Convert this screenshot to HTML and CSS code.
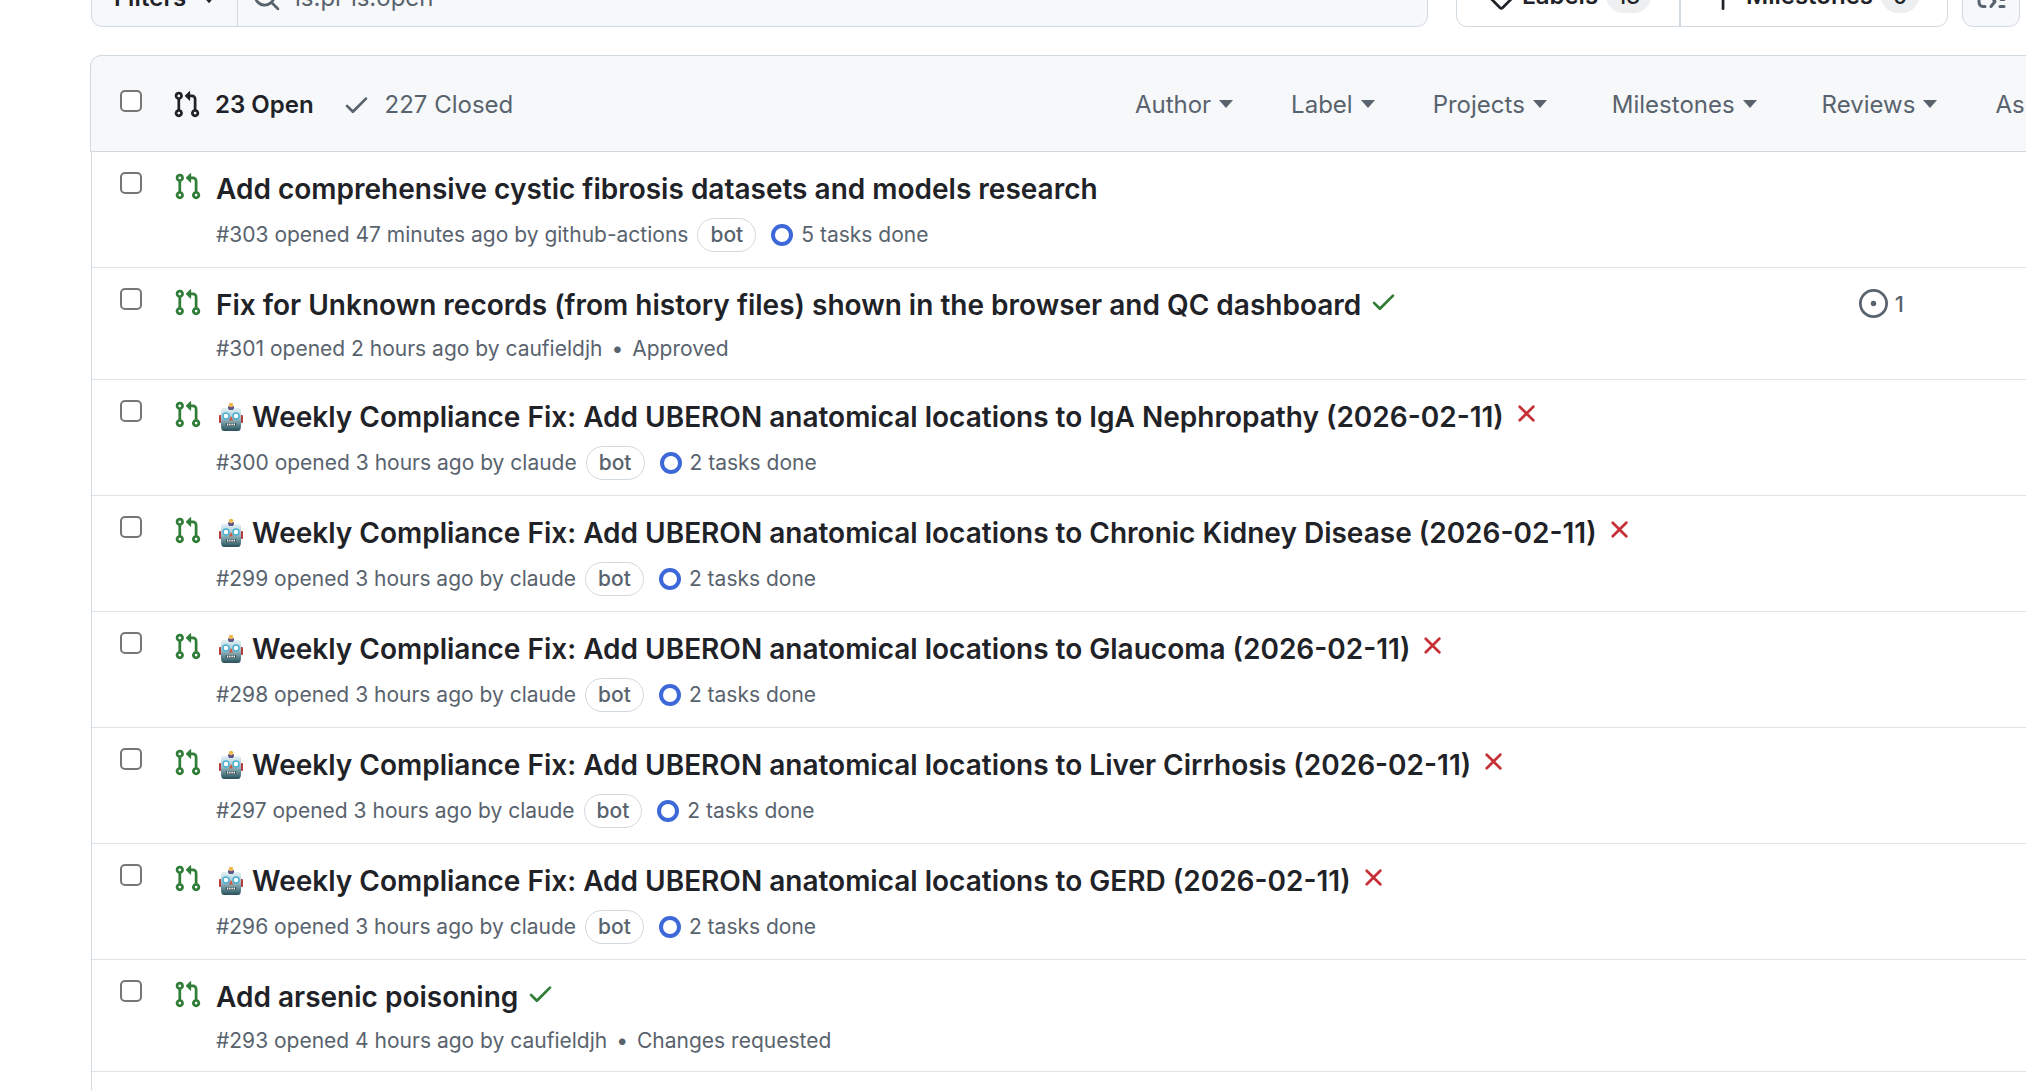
FILE: index.html
```html
<!DOCTYPE html>
<html lang="en">
	<head>
		<meta charset="utf-8">
		<title>Pull requests</title>

		<link rel="stylesheet" href="styles.css">
	</head>
	<body>
		<!-- icon sprite -->
		<svg class="sprite" aria-hidden="true">
			<symbol id="pr" viewBox="0 0 16 16">
				<path d="M1.5 3.25a2.25 2.25 0 1 1 3 2.122v5.256a2.251 2.251 0 1 1-1.5 0V5.372A2.25 2.25 0 0 1 1.5 3.25Zm5.677-.177L9.573.677A.25.25 0 0 1 10 .854V2.5h1A2.5 2.5 0 0 1 13.5 5v5.628a2.251 2.251 0 1 1-1.5 0V5a1 1 0 0 0-1-1h-1v1.646a.25.25 0 0 1-.427.177L7.177 3.427a.25.25 0 0 1 0-.354ZM3.75 2.5a.75.75 0 1 0 0 1.5.75.75 0 0 0 0-1.5Zm0 9.5a.75.75 0 1 0 0 1.5.75.75 0 0 0 0-1.5Zm8.25.75a.75.75 0 1 0 1.5 0 .75.75 0 0 0-1.5 0Z"/>
			</symbol>
			<symbol id="check" viewBox="0 0 16 16">
				<path d="M13.78 4.22a.75.75 0 0 1 0 1.06l-7.25 7.25a.75.75 0 0 1-1.06 0L2.22 9.28a.751.751 0 0 1 .018-1.042.751.751 0 0 1 1.042-.018L6 10.94l6.72-6.72a.75.75 0 0 1 1.06 0Z"/>
			</symbol>
			<symbol id="cross" viewBox="0 0 16 16">
				<path d="M3.72 3.72a.75.75 0 0 1 1.06 0L8 6.94l3.22-3.22a.749.749 0 0 1 1.275.326.749.749 0 0 1-.215.734L9.06 8l3.22 3.22a.749.749 0 0 1-.326 1.275.749.749 0 0 1-.734-.215L8 9.06l-3.22 3.22a.751.751 0 0 1-1.042-.018.751.751 0 0 1-.018-1.042L6.94 8 3.72 4.78a.75.75 0 0 1 0-1.06Z"/>
			</symbol>
			<symbol id="issue" viewBox="0 0 16 16">
				<path d="M8 9.5a1.5 1.5 0 1 0 0-3 1.5 1.5 0 0 0 0 3Z"/>
				<path d="M8 0a8 8 0 1 1 0 16A8 8 0 0 1 8 0ZM1.5 8a6.5 6.5 0 1 0 13 0 6.5 6.5 0 0 0-13 0Z"/>
			</symbol>
			<symbol id="search" viewBox="0 0 16 16">
				<path d="M10.68 11.74a6 6 0 0 1-7.922-8.982 6 6 0 0 1 8.982 7.922l3.04 3.04a.749.749 0 0 1-.326 1.275.749.749 0 0 1-.734-.215ZM11.5 7a4.499 4.499 0 1 0-8.997 0A4.499 4.499 0 0 0 11.5 7Z"/>
			</symbol>
			<symbol id="tag" viewBox="0 0 16 16">
				<path d="M1 7.775V2.75C1 1.784 1.784 1 2.75 1h5.025c.464 0 .91.184 1.238.513l6.25 6.25a1.75 1.75 0 0 1 0 2.474l-5.026 5.026a1.75 1.75 0 0 1-2.474 0l-6.25-6.25A1.752 1.752 0 0 1 1 7.775Zm1.5 0c0 .066.026.13.073.177l6.25 6.25a.25.25 0 0 0 .354 0l5.025-5.025a.25.25 0 0 0 0-.354l-6.25-6.25a.25.25 0 0 0-.177-.073H2.75a.25.25 0 0 0-.25.25ZM6 5a1 1 0 1 1 0 2 1 1 0 0 1 0-2Z"/>
			</symbol>
			<symbol id="milestone" viewBox="0 0 16 16">
				<path d="M7.75 0a.75.75 0 0 1 .75.75V3h3.634c.414 0 .814.147 1.13.414l2.07 1.75a1.75 1.75 0 0 1 0 2.672l-2.07 1.75a1.75 1.75 0 0 1-1.13.414H8.5v5.25a.75.75 0 0 1-1.5 0V10H2.75A1.75 1.75 0 0 1 1 8.25v-3.5C1 3.784 1.784 3 2.75 3H7V.75A.75.75 0 0 1 7.75 0Zm4.384 8.5a.25.25 0 0 0 .161-.06l2.07-1.75a.248.248 0 0 0 0-.38l-2.07-1.75a.25.25 0 0 0-.161-.06H2.75a.25.25 0 0 0-.25.25v3.5c0 .138.112.25.25.25Z"/>
			</symbol>
			<symbol id="caret" viewBox="0 0 14 8">
				<path d="M0 0h14l-7 8z"/>
			</symbol>
			<symbol id="ring" viewBox="0 0 22 22">
				<circle cx="11" cy="11" r="9" fill="none" stroke="currentColor" stroke-width="4"/>
			</symbol>
			<symbol id="codescan" viewBox="0 0 29 29">
				<path d="M8 23.500H6q-4 0-4-5v-8q0-5 4-5M14 13.500l4 5-4 5M23 23.500h4M24 16.500h3" fill="none" stroke="currentColor" stroke-width="3" stroke-linecap="round" stroke-linejoin="round"/>
			</symbol>
			<symbol id="robot" viewBox="0 0 26 30">
				<defs>
					<linearGradient id="metal" x1="0" y1="0" x2="0" y2="1">
						<stop offset="0" stop-color="#e4f2f4"/>
						<stop offset=".4" stop-color="#a5cbd3"/>
						<stop offset="1" stop-color="#28515c"/>
					</linearGradient>
				</defs>
				<rect x="1" y="13" width="3" height="8" rx="1" fill="#b83c3a"/>
				<rect x="22" y="13" width="3" height="8" rx="1" fill="#b83c3a"/>
				<rect x="10" y="4" width="6" height="4" rx="1" fill="#5d548c"/>
				<circle cx="13" cy="3" r="2.300" fill="#efb94f"/>
				<path d="M5 6h16q2 0 2 3v15q0 5-3 5H6q-3 0-3-5V9q0-3 2-3z" fill="url(#metal)"/>
				<path d="M10 6h6l-1 2h-4z" fill="#5d548c"/>
				<circle cx="8" cy="14" r="3" fill="#fff" stroke="#4db0d5" stroke-width="1.500"/>
				<circle cx="18" cy="14" r="3" fill="#fff" stroke="#4db0d5" stroke-width="1.500"/>
				<path d="M13 14l2.200 4.500h-4.400z" fill="#d2553f"/>
				<rect x="8" y="21" width="10" height="3" rx="1" fill="#33454a"/>
				<path d="M9 22.500h8" stroke="#fff" stroke-width="1.800" stroke-dasharray="1.400 .800"/>
			</symbol>
		</svg>

		<div class="page">
			<div class="toolbar">
				<form class="search">
					<button class="filters" type="button">Filters <svg class="caret"><use href="#caret"/></svg></button>
					<label class="query">
						<svg class="icon"><use href="#search"/></svg>
						<input type="text" value="is:pr is:open" aria-label="Search all pull requests">
					</label>
				</form>
				<nav class="links">
					<a href="#labels"><svg class="icon"><use href="#tag"/></svg>Labels<span class="count">13</span></a>
					<a href="#milestones"><svg class="icon"><use href="#milestone"/></svg>Milestones<span class="count">0</span></a>
				</nav>
				<button class="code" type="button" aria-label="Code"><svg class="icon"><use href="#codescan"/></svg></button>
			</div>

			<div class="box">
				<div class="header">
					<input class="tick" type="checkbox" aria-label="Select all">
					<a class="state open" href="#open"><svg class="icon"><use href="#pr"/></svg>23 Open</a>
					<a class="state" href="#closed"><svg class="icon"><use href="#check"/></svg>227 Closed</a>
					<div class="menus">
						<button type="button">Author <svg class="caret"><use href="#caret"/></svg></button>
						<button type="button">Label <svg class="caret"><use href="#caret"/></svg></button>
						<button type="button">Projects <svg class="caret"><use href="#caret"/></svg></button>
						<button class="wide" type="button">Milestones <svg class="caret"><use href="#caret"/></svg></button>
						<button type="button">Reviews <svg class="caret"><use href="#caret"/></svg></button>
						<button type="button">Assignee <svg class="caret"><use href="#caret"/></svg></button>
					</div>
				</div>

				<div class="rows">
					<div class="row">
						<input class="tick" type="checkbox" aria-label="Select #303">
						<svg class="icon green"><use href="#pr"/></svg>
						<div class="main">
							<div class="title"><a href="#303">Add comprehensive cystic fibrosis datasets and models research</a></div>
							<div class="meta"><span>#303 opened 47 minutes ago by github-actions</span><span class="bot">bot</span><span class="tasks"><svg class="ring"><use href="#ring"/></svg>5 tasks done</span></div>
						</div>
					</div>

					<div class="row">
						<input class="tick" type="checkbox" aria-label="Select #301">
						<svg class="icon green"><use href="#pr"/></svg>
						<div class="main">
							<div class="title"><a href="#301">Fix for Unknown records (from history files) shown in the browser and QC dashboard</a><svg class="icon green"><use href="#check"/></svg></div>
							<div class="meta"><span>#301 opened 2 hours ago by caufieldjh</span><span class="dot">•</span><span>Approved</span></div>
						</div>
						<a class="linked" href="#linked"><svg class="icon"><use href="#issue"/></svg>1</a>
					</div>

					<div class="row">
						<input class="tick" type="checkbox" aria-label="Select #300">
						<svg class="icon green"><use href="#pr"/></svg>
						<div class="main">
							<div class="title"><svg class="robot"><use href="#robot"/></svg><a href="#300">Weekly Compliance Fix: Add UBERON anatomical locations to IgA Nephropathy (2026-02-11)</a><svg class="icon red"><use href="#cross"/></svg></div>
							<div class="meta"><span>#300 opened 3 hours ago by claude</span><span class="bot">bot</span><span class="tasks"><svg class="ring"><use href="#ring"/></svg>2 tasks done</span></div>
						</div>
					</div>

					<div class="row">
						<input class="tick" type="checkbox" aria-label="Select #299">
						<svg class="icon green"><use href="#pr"/></svg>
						<div class="main">
							<div class="title"><svg class="robot"><use href="#robot"/></svg><a href="#299">Weekly Compliance Fix: Add UBERON anatomical locations to Chronic Kidney Disease (2026-02-11)</a><svg class="icon red"><use href="#cross"/></svg></div>
							<div class="meta"><span>#299 opened 3 hours ago by claude</span><span class="bot">bot</span><span class="tasks"><svg class="ring"><use href="#ring"/></svg>2 tasks done</span></div>
						</div>
					</div>

					<div class="row">
						<input class="tick" type="checkbox" aria-label="Select #298">
						<svg class="icon green"><use href="#pr"/></svg>
						<div class="main">
							<div class="title"><svg class="robot"><use href="#robot"/></svg><a href="#298">Weekly Compliance Fix: Add UBERON anatomical locations to Glaucoma (2026-02-11)</a><svg class="icon red"><use href="#cross"/></svg></div>
							<div class="meta"><span>#298 opened 3 hours ago by claude</span><span class="bot">bot</span><span class="tasks"><svg class="ring"><use href="#ring"/></svg>2 tasks done</span></div>
						</div>
					</div>

					<div class="row">
						<input class="tick" type="checkbox" aria-label="Select #297">
						<svg class="icon green"><use href="#pr"/></svg>
						<div class="main">
							<div class="title"><svg class="robot"><use href="#robot"/></svg><a href="#297">Weekly Compliance Fix: Add UBERON anatomical locations to Liver Cirrhosis (2026-02-11)</a><svg class="icon red"><use href="#cross"/></svg></div>
							<div class="meta"><span>#297 opened 3 hours ago by claude</span><span class="bot">bot</span><span class="tasks"><svg class="ring"><use href="#ring"/></svg>2 tasks done</span></div>
						</div>
					</div>

					<div class="row">
						<input class="tick" type="checkbox" aria-label="Select #296">
						<svg class="icon green"><use href="#pr"/></svg>
						<div class="main">
							<div class="title"><svg class="robot"><use href="#robot"/></svg><a href="#296">Weekly Compliance Fix: Add UBERON anatomical locations to GERD (2026-02-11)</a><svg class="icon red"><use href="#cross"/></svg></div>
							<div class="meta"><span>#296 opened 3 hours ago by claude</span><span class="bot">bot</span><span class="tasks"><svg class="ring"><use href="#ring"/></svg>2 tasks done</span></div>
						</div>
					</div>

					<div class="row">
						<input class="tick" type="checkbox" aria-label="Select #293">
						<svg class="icon green"><use href="#pr"/></svg>
						<div class="main">
							<div class="title"><a href="#293">Add arsenic poisoning</a><svg class="icon green"><use href="#check"/></svg></div>
							<div class="meta"><span>#293 opened 4 hours ago by caufieldjh</span><span class="dot">•</span><span>Changes requested</span></div>
						</div>
					</div>
				</div>
			</div>
		</div>
	</body>
</html>
```
FILE: styles.css
```css
* {
	margin: 0;
	padding: 0;
	box-sizing: border-box;
}

html, body {
	height: 100%;
	overflow: hidden;
}

body {
	background: #fff;
	color: #1f2328;
	font-family: Inter, "Liberation Sans", sans-serif;
	font-size: 24px;
	white-space: nowrap;
}

a {
	color: inherit;
	text-decoration: none;
}

button, input {
	font: inherit;
	color: inherit;
	border: 0;
	background: none;
}

svg {
	flex: none;
	fill: currentColor;
}

.sprite {
	position: absolute;
	width: 0;
	height: 0;
}

.icon {
	width: 29px;
	height: 29px;
}

.caret {
	width: 14px;
	height: 8px;
}

.green {
	color: #2f7d37;
}

.red {
	color: #c62f36;
}

/* the list is wider than the window and runs off its right edge */
.page {
	display: flex;
	flex-direction: column;
	min-height: 100%;
	margin-left: 91px;
	margin-right: -112px;
}

/* toolbar */
.toolbar {
	display: flex;
	height: 59px;
	margin-top: -32px;
	margin-bottom: 28px;
	padding-right: 118px;
}

.search {
	display: flex;
	flex: 1;
	border: 1px solid #d1d9e0;
	border-radius: 11px;
	background: #f6f8fa;
}

.filters {
	display: flex;
	align-items: center;
	gap: 14px;
	width: 146px;
	padding-left: 22px;
	border-right: 1px solid #d1d9e0;
	font-weight: 600;
}

.filters .caret {
	width: 18px;
	height: 12px;
}

.query {
	display: flex;
	flex: 1;
	align-items: center;
	gap: 14px;
	padding-left: 14px;
	color: #59636e;
}

.query input {
	flex: 1;
}

.links {
	display: flex;
	margin-left: 28px;
	border: 1px solid #d1d9e0;
	border-radius: 11px;
	font-weight: 600;
}

.links a {
	display: flex;
	align-items: center;
	gap: 8px;
	padding: 0 28px 4px;
}

.links a + a {
	border-left: 2px solid #d1d9e0;
}

.count {
	min-width: 38px;
	padding: 0 11px;
	border-radius: 18px;
	background: #eeeff1;
	font-size: 22px;
	font-weight: 500;
	line-height: 34px;
	text-align: center;
}

.code {
	display: flex;
	align-items: center;
	justify-content: center;
	width: 58px;
	margin-left: 14px;
	border: 1px solid #d1d9e0;
	border-radius: 11px;
	background: #f6f8fa;
	color: #59636e;
}

/* list */
.box {
	display: flex;
	flex: 1;
	flex-direction: column;
}

.header {
	display: flex;
	align-items: center;
	height: 97px;
	margin-left: -1px;
	padding: 1px 15px 0 29px;
	border: 1px solid #d1d9e0;
	border-radius: 11px 0 0 0;
	background: #f6f8fa;
	color: #59636e;
}

.tick {
	flex: none;
	appearance: none;
	width: 22px;
	height: 22px;
	border: 2px solid #767676;
	border-radius: 5px;
	background: #fff;
}

.header .tick {
	margin-bottom: 6px;
	margin-right: 30px;
}

.state {
	display: flex;
	align-items: center;
	gap: 14px;
	margin-right: 28px;
}

.open {
	color: #1f2328;
	font-weight: 600;
}

.menus {
	display: flex;
	gap: 58px;
	margin-left: auto;
}

.menus button {
	display: flex;
	align-items: center;
	gap: 8px;
}

.menus .wide {
	margin: 0 7px;
}

.rows {
	flex: 1;
	border-left: 1px solid #d1d9e0;
}

.row {
	display: flex;
	align-items: flex-start;
	padding: 17px 234px 15px 28px;
	border-bottom: 1px solid #dde3e9;
}

.row .tick {
	margin-top: 3px;
	margin-right: 31px;
}

.row > .icon {
	margin-top: 3px;
	margin-right: 14px;
}

.main {
	flex: 1;
}

.title {
	display: flex;
	align-items: center;
	font-size: 28px;
	font-weight: 600;
	line-height: 40px;
}

.title .icon {
	margin-left: 8px;
	margin-bottom: 7px;
}

.robot {
	width: 26px;
	height: 30px;
	margin: 0 8px 0 2px;
}

.meta {
	display: flex;
	align-items: center;
	margin-top: 9px;
	color: #59636e;
	font-size: 21px;
	line-height: 30px;
}

.bot {
	margin-left: 9px;
	padding: 1px 12px;
	border: 1px solid #d1d9e0;
	border-radius: 17px;
	font-weight: 500;
}

.tasks {
	display: flex;
	align-items: center;
	gap: 8px;
	margin-left: 15px;
}

.ring {
	width: 22px;
	height: 22px;
	color: #3d68d8;
}

.dot {
	margin: 0 9px;
}

.linked {
	display: flex;
	align-items: center;
	gap: 7px;
	margin-top: 4px;
	color: #59636e;
	font-size: 22px;
	font-weight: 500;
}
```
